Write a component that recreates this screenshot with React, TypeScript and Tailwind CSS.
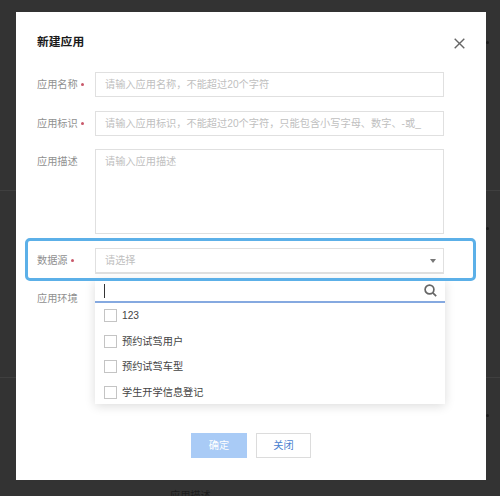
const font = { fontFamily: '"Liberation Sans", "Noto Sans CJK SC", sans-serif' };

const sources = ["123", "预约试驾用户", "预约试驾车型", "学生开学信息登记"];

const Label = ({ text, required }: { text: string; required?: boolean }) => (
  <div className="flex h-[25px] w-[58px] shrink-0 items-center text-[10.2px] text-[#909090] whitespace-nowrap">
    {text}
    {required && <span className="ml-[3px] h-[3px] w-[3px] rounded-full bg-[#c9586a]" />}
  </div>
);

const Dot = () => <div className="ml-[486px] h-[3px] w-[3px] rounded-full bg-[#1c1c1c]" />;

const App = () => {
  return (
    <div
      className="relative h-[496px] w-[500px] overflow-hidden bg-[#333333]"
      style={font}
    >
      {/* page behind the overlay */}
      <div className="h-[191px] border-b border-[#3f3f3f] pt-[41px]">
        <Dot />
      </div>
      <div className="h-[187px] border-b border-[#3f3f3f] pt-[36px]">
        <Dot />
      </div>
      <div className="pt-[36px]">
        <Dot />
      </div>
      <div className="ml-[170px] mt-[72px] text-[10.2px] leading-[14px] text-[#1c1c1c]">应用描述</div>

      {/* modal */}
      <div className="absolute left-[16px] top-[12px] flex h-[468px] w-[470px] flex-col bg-white pl-[21px] pr-[42px]">
        <div className="flex h-[60px] items-center justify-between pt-[2px]">
          <h2 className="text-[11.8px] font-bold text-[#1a1a1a]">新建应用</h2>
          <svg className="-mr-[21px] h-[11px] w-[11px]" viewBox="0 0 11 11" fill="none" stroke="#666666" strokeWidth="1.4">
            <path d="M.7.7l9.6 9.6M10.3.7L.7 10.3" />
          </svg>
        </div>

        <div className="flex flex-col">
          <div className="flex">
            <Label text="应用名称" required />
            <div className="h-[25px] flex-1 border border-[#e0e0e0] px-[9px] text-[10.2px] leading-[23px] text-[#c0c0c0]">
              请输入应用名称，不能超过20个字符
            </div>
          </div>
          <div className="mt-[14px] flex">
            <Label text="应用标识" required />
            <div className="h-[25px] flex-1 whitespace-nowrap border border-[#e0e0e0] px-[9px] text-[10.2px] leading-[23px] text-[#c0c0c0]">
              请输入应用标识，不能超过20个字符，只能包含小写字母、数字、-或_
            </div>
          </div>
          <div className="mt-[13px] flex">
            <Label text="应用描述" />
            <div className="h-[85px] flex-1 border border-[#e0e0e0] px-[9px] text-[10.2px] leading-[23px] text-[#c0c0c0]">
              请输入应用描述
            </div>
          </div>
          <div className="mt-[14px] flex">
            <Label text="数据源" required />
            <div className="flex h-[26px] flex-1 items-center justify-between border border-[#e0e0e0] border-b-2 pl-[9px] pr-[7px] text-[10.2px] text-[#c0c0c0]">
              请选择
              <span className="h-0 w-0 border-x-[3.5px] border-t-[4px] border-x-transparent border-t-[#777777]" />
            </div>
          </div>
          <div className="mt-[12px] flex">
            <Label text="应用环境" />
          </div>
        </div>

        <div className="mt-auto mb-[22px] flex justify-center gap-[9px] pl-[21px]">
          <button className="h-[25px] w-[56px] bg-[#a9cbf6] text-[10.2px] text-white">确定</button>
          <button className="h-[25px] w-[55px] border border-[#dcdcdc] text-[10.2px] text-[#4a7fd0]">关闭</button>
        </div>

        {/* open select dropdown */}
        <div className="absolute left-[79px] top-[268px] h-[124px] w-[350px] bg-white shadow-[0_2px_10px_rgba(0,0,0,0.14)]">
          <div className="flex h-[23px] items-center justify-between border-b-2 border-[#85a9e0] pl-[9px] pr-[8px]">
            <span className="h-[14px] w-[1px] bg-[#333333]" />
            <svg className="h-[13px] w-[13px]" viewBox="0 0 13 13" fill="none" stroke="#666666" strokeWidth="1.7">
              <circle cx="5.5" cy="5.5" r="4.4" />
              <path d="M8.8 8.8L12.2 12.2" />
            </svg>
          </div>
          {sources.map((name) => (
            <div key={name} className="flex h-[25.5px] items-center gap-[5px] pl-[9px] text-[10.2px] text-[#444444]">
              <span className="h-[13px] w-[13px] border border-[#c4c4c4]" />
              {name}
            </div>
          ))}
        </div>

        {/* callout around the data source row */}
        <div className="absolute left-[9px] top-[226px] h-[43px] w-[451px] rounded-[5px] border-[3px] border-[#5cb0e8]" />
      </div>
    </div>
  );
};

export default App;
